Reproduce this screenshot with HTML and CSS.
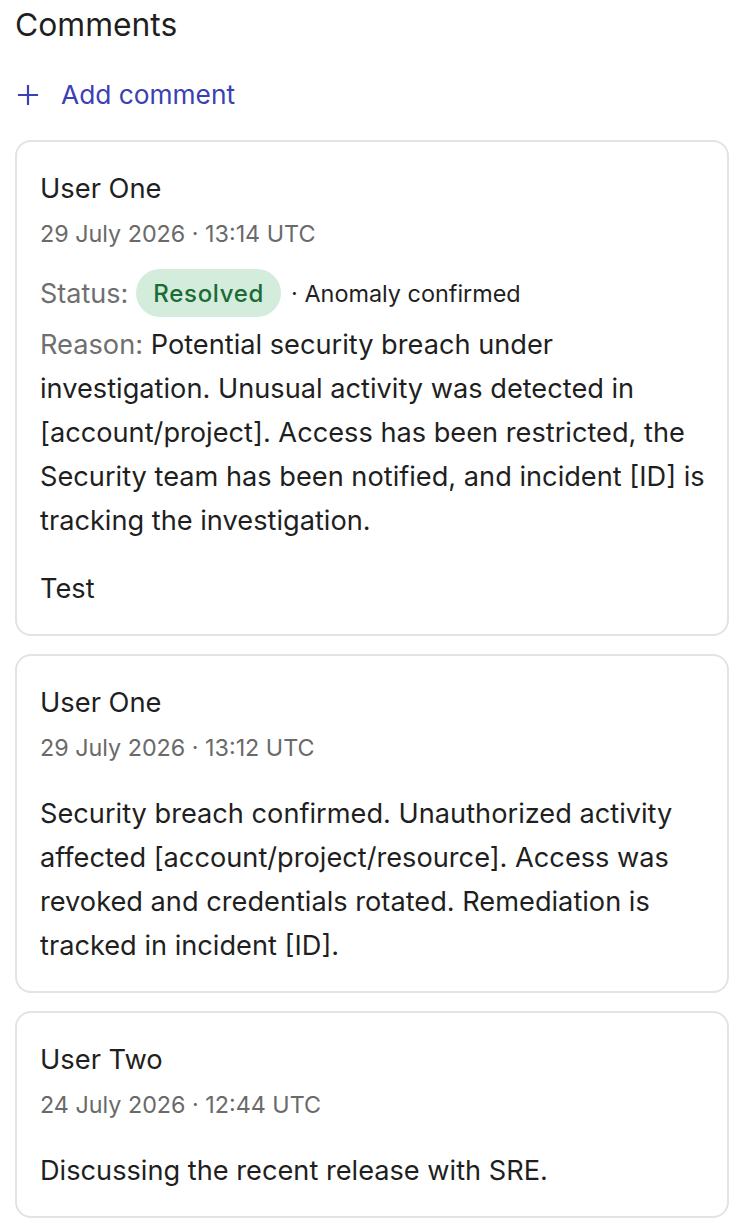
FILE: index.html
```html
<!DOCTYPE html>
<html lang="en">
<head>
<meta charset="utf-8">
<title>Comments</title>
<link rel="stylesheet" href="styles.css">
</head>
<body>
<main class="comments">
  <h1 class="title">Comments</h1>
  <button class="add-btn" type="button">
    <svg class="add-icon" viewBox="0 0 24 24" width="24" height="24" aria-hidden="true"><path d="M12 1v22M1 12h22" stroke="currentColor" stroke-width="2.4" fill="none"/></svg>
    <span>Add comment</span>
  </button>

  <article class="card">
    <div class="name">User One</div>
    <div class="date">29 July 2026 · 13:14 UTC</div>
    <div class="status-row">
      <span class="label">Status:</span>
      <span class="badge">Resolved</span>
      <span class="status-note">· Anomaly confirmed</span>
    </div>
    <p class="reason"><span class="label">Reason:</span> Potential security breach under investigation. Unusual activity was detected in [account/project]. Access has been restricted, the Security team has been notified, and incident [ID] is tracking the investigation.</p>
    <p class="body">Test</p>
  </article>

  <article class="card">
    <div class="name">User One</div>
    <div class="date">29 July 2026 · 13:12 UTC</div>
    <p class="body first">Security breach confirmed. Unauthorized activity affected [account/project/resource]. Access was revoked and credentials rotated. Remediation is tracked in incident [ID].</p>
  </article>

  <article class="card">
    <div class="name">User Two</div>
    <div class="date">24 July 2026 · 12:44 UTC</div>
    <p class="body first">Discussing the recent release with SRE.</p>
  </article>
</main>
</body>
</html>
```

FILE: styles.css
```css
* { box-sizing: border-box; }
html, body { margin: 0; padding: 0; background: #fff; }
body {
  font-family: Inter, "Noto Sans", sans-serif;
  color: #1f1f1f;
}
.comments {
  padding: 0 15px;
  display: flex;
  flex-direction: column;
}
.title {
  margin: 6px 0 0;
  font-size: 31.8px;
  font-weight: 400;
  line-height: 38px;
  color: #1f1f1f;
}
.add-btn {
  margin-top: 36px;
  align-self: flex-start;
  display: flex;
  align-items: center;
  gap: 22px;
  border: 0;
  background: none;
  padding: 0 0 0 2px;
  font-family: inherit;
  font-size: 26.3px;
  line-height: 30px;
  color: #3b40b4;
  cursor: pointer;
}
.add-icon { width: 22px; height: 22px; }
.card {
  margin-top: 30px;
  border: 2px solid #e3e3e3;
  border-radius: 16px;
  padding: 25px 20px 23px 23px;
}
.card + .card { margin-top: 17.5px; }
.name {
  font-size: 27.3px;
  line-height: 44px;
  color: #1f1f1f;
}
.date {
  font-size: 23.3px;
  line-height: 46px;
  color: #6a6a6a;
}
.status-row {
  margin-top: 12px;
  display: flex;
  align-items: center;
  gap: 8px;
  font-size: 27px;
}
.label { color: #6f6f6f; }
.badge {
  background: #d3ecdb;
  color: #1b6b36;
  border-radius: 24px;
  height: 48px;
  padding: 0 17px;
  display: inline-flex;
  align-items: center;
  font-size: 24px;
  letter-spacing: 0.7px;
  font-weight: 500;
}
.status-note {
  font-size: 23.4px;
  color: #1f1f1f;
  margin-left: 2px;
}
.reason, .body {
  margin: 0;
  font-size: 27.2px;
  line-height: 44px;
  color: #1f1f1f;
}
.reason { margin-top: 6px; }
.reason + .body { margin-top: 24px; }
.body.first { margin-top: 21.5px; }
```
